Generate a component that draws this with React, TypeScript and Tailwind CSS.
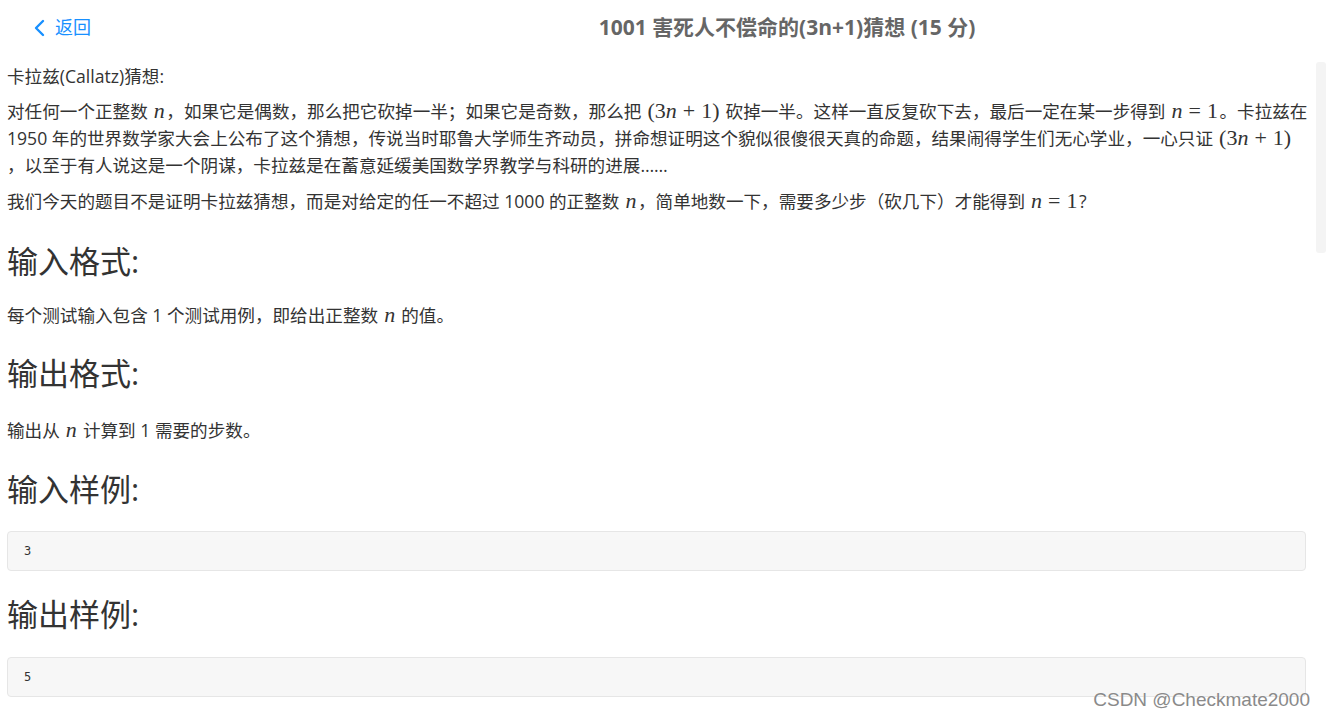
import React from "react";

const cjk = { fontFamily: '"Open Sans", "Noto Sans CJK SC", sans-serif' };
const mathFont = { fontFamily: '"Liberation Serif", "DejaVu Serif", serif' };

function M({ children }: { children: React.ReactNode }) {
  return (
    <span className="text-[22px] leading-none whitespace-nowrap mx-[1.5px]" style={mathFont}>
      {children}
    </span>
  );
}
function N() {
  return <i>n</i>;
}
function Op({ c }: { c: string }) {
  return <span className="mx-[6px]">{c}</span>;
}

function Heading({ children, className }: { children: React.ReactNode; className: string }) {
  return (
    <h2 className={"text-[31px] leading-[38px] text-[#333333] font-normal " + className}>
      {children}
    </h2>
  );
}

function Code({ children }: { children: React.ReactNode }) {
  return (
    <div
      className="h-[40px] bg-[#f7f7f7] border border-[#e6e6e6] rounded-[4px] flex items-center pl-[16px] text-[12px] text-[#333333]"
      style={{ fontFamily: '"DejaVu Sans Mono", monospace' }}
    >
      {children}
    </div>
  );
}

export default function App() {
  return (
    <div className="relative w-[1326px] h-[718px] overflow-hidden bg-white text-[#333333]" style={cjk}>
      <header className="h-[55px] flex items-center">
        <div className="w-[258px] flex items-center pl-[33px] text-[#1890ff] text-[18px]">
          <svg width="14" height="20" viewBox="0 0 14 20" className="mr-[8px]">
            <path d="M10 3 L3 10 L10 17" fill="none" stroke="#1890ff" strokeWidth="2.4" strokeLinecap="round" strokeLinejoin="round" />
          </svg>
          <span>返回</span>
        </div>
        <div className="flex-1 text-center pr-[10px] text-[21px] font-bold text-[#666666]">
          1001 害死人不偿命的(3n+1)猜想 (15 分)
        </div>
      </header>

      <div className="absolute right-0 top-[62px] w-[10px] h-[191px] bg-[#f4f4f4] rounded-[3px]" />

      <main className="pl-[7px] pr-[20px] pt-[9px] text-[17.6px]">
        <p className="leading-[24px] mb-[10px]">卡拉兹(Callatz)猜想:</p>
        <p className="leading-[27px] mb-[9px] whitespace-nowrap">
          对任何一个正整数 <M><N /></M>，如果它是偶数，那么把它砍掉一半；如果它是奇数，那么把 <M>(3<N /><Op c="+" />1)</M> 砍掉一半。这样一直反复砍下去，最后一定在某一步得到 <M><N /><Op c="=" />1</M>。卡拉兹在
          <br />
          1950 年的世界数学家大会上公布了这个猜想，传说当时耶鲁大学师生齐动员，拼命想证明这个貌似很傻很天真的命题，结果闹得学生们无心学业，一心只证 <M>(3<N /><Op c="+" />1)</M>
          <br />
          ，以至于有人说这是一个阴谋，卡拉兹是在蓄意延缓美国数学界教学与科研的进展……
        </p>
        <p className="leading-[27px] whitespace-nowrap">
          我们今天的题目不是证明卡拉兹猜想，而是对给定的任一不超过 1000 的正整数 <M><N /></M>，简单地数一下，需要多少步（砍几下）才能得到 <M><N /><Op c="=" />1</M>?
        </p>

        <Heading className="mt-[27px] mb-[23px]">输入格式:</Heading>
        <p className="leading-[24px]">每个测试输入包含 1 个测试用例，即给出正整数 <M><N /></M> 的值。</p>

        <Heading className="mt-[27px] mb-[26px]">输出格式:</Heading>
        <p className="leading-[24px]">输出从 <M><N /></M> 计算到 1 需要的步数。</p>

        <Heading className="mt-[28px] mb-[23px]">输入样例:</Heading>
        <Code>3</Code>

        <Heading className="mt-[24px] mb-[24px]">输出样例:</Heading>
        <Code>5</Code>
      </main>

      <div
        className="absolute right-[16px] bottom-[4px] text-[19px] text-[#8a8a8a]"
        style={{ fontFamily: '"Liberation Sans", Arial, sans-serif', textShadow: "0 0 1px #ffffff" }}
      >
        CSDN @Checkmate2000
      </div>
    </div>
  );
}
